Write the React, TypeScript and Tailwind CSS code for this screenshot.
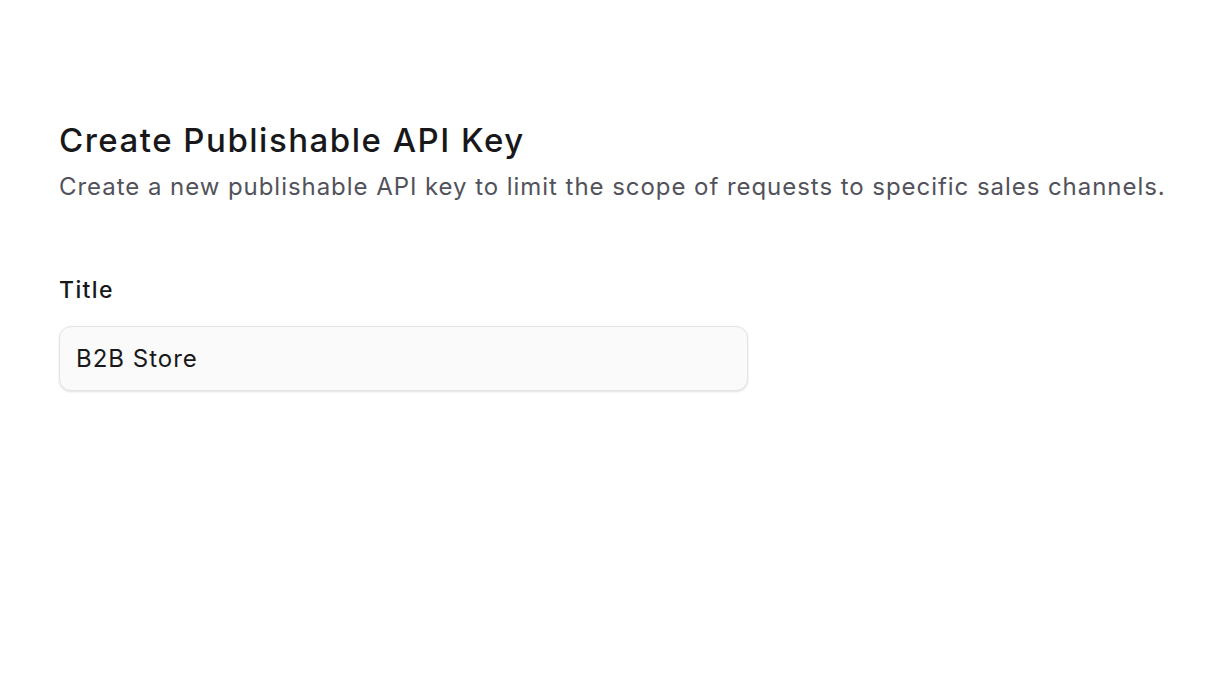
export default function App() {
  return (
    <div className="min-h-screen bg-white font-['Inter',sans-serif] text-[#18181b]">
      <div className="px-[59px] pt-[117px]">
        <h1 className="text-[33px] leading-[46px] font-medium tracking-[1.5px]">Create Publishable API Key</h1>
        <p className="mt-[8px] whitespace-nowrap text-[24px] leading-[32px] tracking-[0.95px] text-[#52525b]">
          Create a new publishable API key to limit the scope of requests to specific sales channels.
        </p>
        <div className="mt-[71px] w-[689px]">
          <label className="block text-[23px] leading-[32px] font-medium tracking-[1.4px]">Title</label>
          <input
            defaultValue="B2B Store"
            className="mt-[20px] h-[65px] w-full rounded-[12px] border border-[#e4e4e7] bg-[#fafafa] px-[16px] text-[24px] tracking-[1px] text-[#18181b] shadow-[0_1px_2px_rgba(0,0,0,0.12)] outline-none"
          />
        </div>
      </div>
    </div>
  );
}
